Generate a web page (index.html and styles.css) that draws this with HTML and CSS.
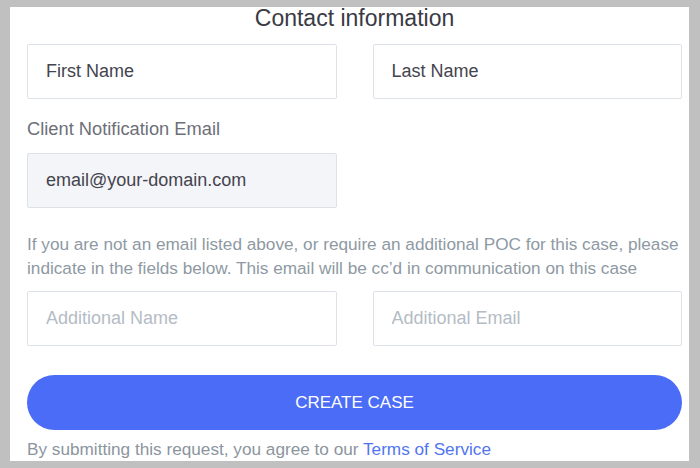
FILE: index.html
```html
<!DOCTYPE html>
<html lang="en">
<head>
    <meta charset="UTF-8">
    <meta name="viewport" content="width=device-width, initial-scale=1.0">
    <title>Contact information</title>
    <link rel="stylesheet" href="styles.css">
</head>
<body>
    <div class="case-modal">
        <h2 class="case-title">Contact information</h2>

        <form id="caseForm" class="case-form">
            <div class="field-row">
                <input type="text" class="field dark" placeholder="First Name">
                <input type="text" class="field dark" placeholder="Last Name">
            </div>

            <label class="field-label" for="notifyEmail">Client Notification Email</label>
            <div class="field-row">
                <input type="email" id="notifyEmail" class="field readonly" value="email@your-domain.com" readonly>
            </div>

            <p class="field-note">
                If you are not an email listed above, or require an additional POC for this case, please
                indicate in the fields below. This email will be cc’d in communication on this case
            </p>

            <div class="field-row">
                <input type="text" class="field" placeholder="Additional Name">
                <input type="email" class="field" placeholder="Additional Email">
            </div>

            <button type="submit" class="create-btn">CREATE CASE</button>
        </form>

        <p class="terms">By submitting this request, you agree to our <a href="#">Terms of Service</a></p>
    </div>
</body>
</html>
```

FILE: styles.css
```css
* {
    margin: 0;
    padding: 0;
    box-sizing: border-box;
}

body {
    font-family: 'Liberation Sans', Arial, Helvetica, sans-serif;
    background: #c0c0c0;
    height: 468px;
    overflow: hidden;
}

.case-modal {
    background: #fff;
    margin: 7px 0 0 10px;
    width: 679px;
    height: 454px;
    padding: 0 7px 0 17px;
}

.case-title {
    text-align: center;
    font-size: 23px;
    line-height: 22px;
    font-weight: 400;
    color: #3a3a44;
    margin-bottom: 15px;
}

.field-row {
    display: grid;
    grid-template-columns: 1fr 1fr;
    column-gap: 36px;
}

.field {
    width: 100%;
    height: 55px;
    padding: 0 18px;
    border: 1px solid #dde1e8;
    border-radius: 2px;
    background: #fff;
    font-family: inherit;
    font-size: 18px;
    color: #44444e;
    outline: none;
}

.field::placeholder {
    color: #b4bcc5;
}

.field.dark::placeholder {
    color: #44444e;
}

.field.readonly {
    background: #f4f5f8;
}

.field-label {
    display: block;
    margin: 19px 0 13px;
    font-size: 18.3px;
    line-height: 22px;
    color: #6d6f78;
}

.field-note {
    margin: 24px 0 11px;
    font-size: 17.2px;
    line-height: 24px;
    color: #8e99a3;
}

.create-btn {
    display: block;
    width: 100%;
    height: 55px;
    margin-top: 29px;
    border: none;
    border-radius: 28px;
    background: #4a6cf7;
    color: #fff;
    font-family: inherit;
    font-size: 17px;
    cursor: pointer;
}

.terms {
    margin-top: 9px;
    font-size: 17.2px;
    line-height: 20px;
    color: #8b959e;
}

.terms a {
    color: #5175f0;
    text-decoration: none;
}
```
